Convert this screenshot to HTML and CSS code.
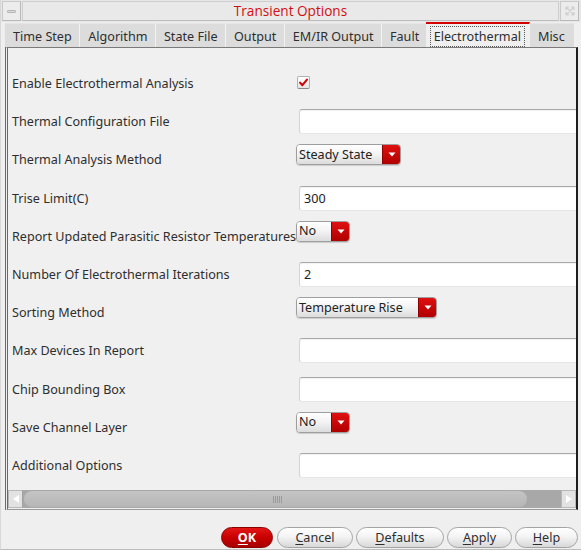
FILE: index.html
```html
<!DOCTYPE html>
<html>
<head>
<meta charset="utf-8">
<title>Transient Options</title>
<link rel="stylesheet" href="styles.css">
</head>
<body>
<div class="window">
  <div class="titlebar">
    <div class="tb-btn tb-menu"><span class="dash"></span></div>
    <div class="tb-title">Transient Options</div>
    <div class="tb-btn tb-close">
      <svg width="14" height="14" viewBox="0 0 14 14"><path d="M3 3l8 8M11 3l-8 8M3 3h3M3 3v3M11 11h-3M11 11v-3M11 3h-3M11 3v3M3 11h3M3 11v-3" stroke="#cfcfcf" stroke-width="1.2" fill="none"/></svg>
    </div>
  </div>

  <div class="tabs">
    <div class="tab">Time Step</div>
    <div class="tab">Algorithm</div>
    <div class="tab">State File</div>
    <div class="tab">Output</div>
    <div class="tab">EM/IR Output</div>
    <div class="tab">Fault</div>
    <div class="tab active"><span class="focus">Electrothermal</span></div>
    <div class="tab last">Misc</div>
  </div>

  <div class="panel">
    <div class="form">
      <div class="row">
        <span class="label">Enable Electrothermal Analysis</span>
        <span class="checkbox"><svg width="12" height="12" viewBox="0 0 12 12"><path d="M2.2 5.6l2.6 2.8 5-6.2" stroke="#d40000" stroke-width="2.2" fill="none" stroke-linecap="round" stroke-linejoin="round"/></svg></span>
      </div>
      <div class="row">
        <span class="label">Thermal Configuration File</span>
        <span class="input"></span>
      </div>
      <div class="row">
        <span class="label">Thermal Analysis Method</span>
        <span class="select w-steady"><span class="sel-text">Steady State</span><span class="sel-btn"><svg width="8" height="5" viewBox="0 0 8 5"><path d="M0.5 0.5h7l-3.5 4z" fill="#fff"/></svg></span></span>
      </div>
      <div class="row">
        <span class="label">Trise Limit(C)</span>
        <span class="input">300</span>
      </div>
      <div class="row">
        <span class="label">Report Updated Parasitic Resistor Temperatures</span>
        <span class="select w-no"><span class="sel-text">No</span><span class="sel-btn"><svg width="8" height="5" viewBox="0 0 8 5"><path d="M0.5 0.5h7l-3.5 4z" fill="#fff"/></svg></span></span>
      </div>
      <div class="row">
        <span class="label">Number Of Electrothermal Iterations</span>
        <span class="input">2</span>
      </div>
      <div class="row">
        <span class="label">Sorting Method</span>
        <span class="select w-temp"><span class="sel-text">Temperature Rise</span><span class="sel-btn"><svg width="8" height="5" viewBox="0 0 8 5"><path d="M0.5 0.5h7l-3.5 4z" fill="#fff"/></svg></span></span>
      </div>
      <div class="row">
        <span class="label">Max Devices In Report</span>
        <span class="input"></span>
      </div>
      <div class="row">
        <span class="label">Chip Bounding Box</span>
        <span class="input"></span>
      </div>
      <div class="row">
        <span class="label">Save Channel Layer</span>
        <span class="select w-no"><span class="sel-text">No</span><span class="sel-btn"><svg width="8" height="5" viewBox="0 0 8 5"><path d="M0.5 0.5h7l-3.5 4z" fill="#fff"/></svg></span></span>
      </div>
      <div class="row">
        <span class="label">Additional Options</span>
        <span class="input"></span>
      </div>
    </div>

    <div class="hscroll">
      <div class="arrow left"><svg width="10" height="10" viewBox="0 0 10 10"><path d="M2 5l6-4v8z" fill="#fff"/></svg></div>
      <div class="trough">
        <div class="thumb"><span class="grip"></span></div>
      </div>
      <div class="arrow right"><svg width="10" height="10" viewBox="0 0 10 10"><path d="M8 5l-6-4v8z" fill="#fff"/></svg></div>
    </div>
  </div>

  <div class="buttons">
    <button class="btn ok"><u>O</u>K</button>
    <button class="btn w-cancel"><u>C</u>ancel</button>
    <button class="btn w-defaults"><u>D</u>efaults</button>
    <button class="btn w-apply"><u>A</u>pply</button>
    <button class="btn w-help"><u>H</u>elp</button>
  </div>
</div>
</body>
</html>
```
FILE: styles.css
```css
* { box-sizing: border-box; }
html, body { margin: 0; padding: 0; }
body {
  width: 581px;
  height: 550px;
  overflow: hidden;
  background: #efefef;
  font-family: "Noto Sans", "Open Sans", sans-serif;
  font-size: 12.6px;
  color: #2e2e2e;
}
.window {
  width: 581px;
  height: 550px;
  display: flex;
  flex-direction: column;
  background: #efefef;
  border-left: 1px solid #d8d8d8;
  border-bottom: 1px solid #bdbdbd;
}

/* title bar */
.titlebar {
  height: 22px;
  display: flex;
  align-items: stretch;
  padding: 1px 2px 1px 1px;
  gap: 1px;
  background: #e6e6e6;
}
.tb-btn {
  width: 19px;
  display: flex;
  align-items: center;
  justify-content: center;
  background: #ececec;
  border: 1px solid #c9c9c9;
  border-right-color: #b9b9b9;
  border-bottom-color: #b9b9b9;
}
.dash {
  width: 9px;
  height: 3px;
  background: #dcdcdc;
  border: 1px solid #b5b5b5;
  border-radius: 1px;
}
.tb-title {
  flex: 1;
  display: flex;
  align-items: center;
  justify-content: center;
  font-family: "Open Sans", "Noto Sans", sans-serif;
  font-size: 13.6px;
  color: #d01010;
  background: #e9e9e9;
  border: 1px solid #cfcfcf;
  border-bottom-color: #bdbdbd;
  padding-bottom: 1px;
}

/* tabs */
.tabs {
  height: 25px;
  display: flex;
  align-items: stretch;
  padding: 1px 0 0 4px;
}
.tab {
  display: flex;
  align-items: center;
  padding: 2px 7.5px 0 8px;
  background: #dcdcdc;
  border-right: 1px solid #f2f2f2;
  border-top: 1px solid #e4e4e4;
  white-space: nowrap;
  color: #2e2e2e;
}
.tab.last { padding-left: 10px; padding-right: 9px; }
.tab.active {
  background: #efefef;
  border-top: 2px solid #d40000;
  margin: -1px -2px 0 -2px;
  padding: 1px 4px 0 4px;
  position: relative;
  z-index: 1;
}
.focus {
  border: 1px dotted #555;
  padding: 2px 3px 1px 3px;
  line-height: 16px;
}

/* panel */
.panel {
  height: 463px;
  margin: 0 3px 0 4px;
  border-top: 1px solid #7a7a7a;
  border-left: 3px double #6a6a6a;
  border-right: 2px solid #1e1e1e;
  border-bottom: 1px solid #9a9a9a;
  display: flex;
  flex-direction: column;
  overflow: hidden;
  background: #f0f0f0;
}
.form {
  flex: 1;
  padding: 16.5px 0 0 4px;
  overflow: hidden;
}
.row {
  height: 38.2px;
  display: flex;
  align-items: center;
}
.label {
  width: 284px;
  flex: none;
  white-space: nowrap;
  overflow: visible;
}
.checkbox {
  width: 13px;
  height: 13px;
  margin-left: 1px;
  margin-bottom: 2px;
  background: linear-gradient(#ffffff, #e4e4e4);
  border: 1px solid #b0b0b0;
  border-bottom-color: #8a8a8a;
  border-radius: 2px;
  display: flex;
  align-items: center;
  justify-content: center;
}
.input {
  flex: none;
  width: 300px;
  height: 25px;
  margin-left: 3px;
  background: #fff;
  border-top: 1px solid #a8a8a8;
  border-left: 1px solid #d4d4d4;
  border-bottom: 1px solid #e6e6e6;
  border-radius: 3px 0 0 3px;
  box-shadow: inset 0 1px 1px rgba(0,0,0,0.06);
  padding: 0 0 0 4px;
  display: flex;
  align-items: center;
  color: #222;
}
.select {
  flex: none;
  height: 21px;
  margin-bottom: 10px;
  display: flex;
  border: 1px solid #9e9e9e;
  border-radius: 4px;
  overflow: hidden;
  box-shadow: 0 1px 1px rgba(0,0,0,0.15);
}
.w-steady { width: 105px; }
.w-no { width: 54px; }
.w-temp { width: 141px; }
.sel-text {
  flex: 1;
  background: linear-gradient(#ffffff 0%, #f2f2f2 50%, #dcdcdc 100%);
  padding: 0 0 1px 2px;
  display: flex;
  align-items: center;
  white-space: nowrap;
  color: #222;
}
.sel-btn {
  width: 18px;
  flex: none;
  background: linear-gradient(#e01010, #b00000);
  border-left: 1px solid #900000;
  display: flex;
  align-items: center;
  justify-content: center;
}

/* horizontal scrollbar */
.hscroll {
  height: 18px;
  flex: none;
  margin-bottom: 1px;
  display: flex;
  background: #a9a9a9;
}
.arrow {
  width: 15px;
  flex: none;
  background: #e2e2e2;
  border: 1px solid #b8b8b8;
  display: flex;
  align-items: center;
  justify-content: center;
}
.arrow.left { border-right: 1px solid #a0a0a0; }
.trough {
  flex: 1;
  padding: 1px 34px 1px 1px;
  background: #a8a8a8;
}
.thumb {
  height: 100%;
  background: linear-gradient(#c4c4c4, #b6b6b6);
  border-radius: 8px;
  display: flex;
  align-items: center;
  justify-content: center;
  padding-left: 4px;
}
.grip {
  width: 9px;
  height: 7px;
  background: repeating-linear-gradient(90deg, #9a9a9a 0 1px, transparent 1px 2px);
}

/* buttons */
.buttons {
  flex: 1;
  display: flex;
  justify-content: flex-end;
  align-items: flex-start;
  gap: 3px;
  padding: 17px 3px 0 0;
}
.btn {
  height: 21px;
  padding: 0;
  font-family: "Noto Sans", "Open Sans", sans-serif;
  font-size: 12.6px;
  color: #2e2e2e;
  background: linear-gradient(#ffffff 0%, #f4f4f4 45%, #d8d8d8 100%);
  border: 1px solid #a4a4a4;
  border-radius: 11px;
  display: flex;
  align-items: center;
  justify-content: center;
}
.btn u { text-underline-offset: 2px; }
.btn.ok {
  width: 52px;
  margin-right: 1px;
  background: linear-gradient(#e41616 0%, #c80000 50%, #a80000 100%);
  border-color: #8a0000;
  color: #fff;
  font-weight: bold;
}
.w-cancel { width: 76px; }
.w-defaults { width: 88px; }
.w-apply { width: 65px; }
.w-help { width: 63px; }
```
